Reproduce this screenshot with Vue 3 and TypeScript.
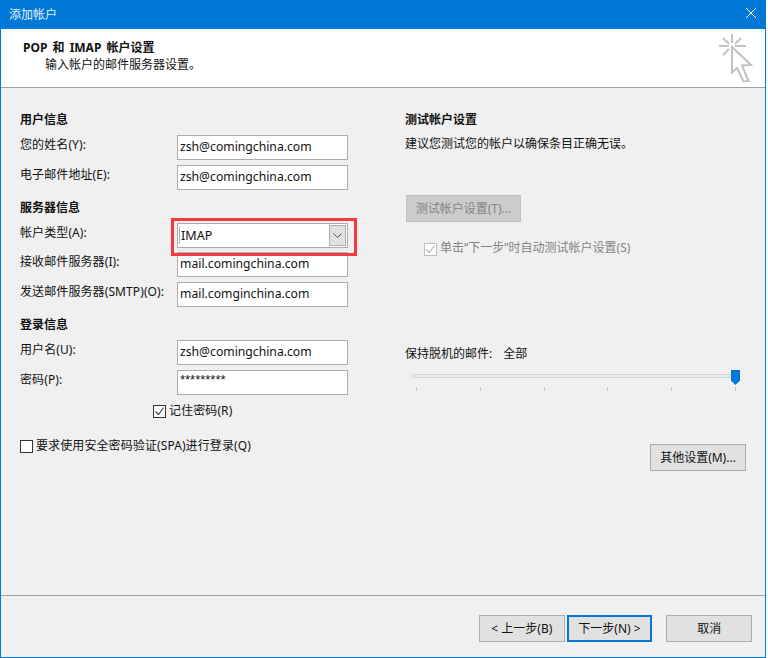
<script setup lang="ts">
const ticks: number[] = [0, 1, 2, 3, 4, 5]
</script>

<template>
  <div class="window">
    <div class="titlebar">
      <span class="title">添加帐户</span>
      <svg class="close" width="10" height="10" viewBox="0 0 10 10">
        <path d="M0 0 L10 10 M10 0 L0 10" stroke="#fff" stroke-width="1" fill="none" />
      </svg>
    </div>
    <div class="header">
      <div class="header-text">
        <div class="h-title">POP 和 IMAP 帐户设置</div>
        <div class="h-sub">输入帐户的邮件服务器设置。</div>
      </div>
      <svg class="wizard" width="36" height="52" viewBox="0 0 36 52">
        <g stroke="#c2c2c2" stroke-width="2" fill="none">
          <path d="M14 1 V10 M1 13 H11 M17 13 H28 M5 5 L11 11 M23 5 L17 11 M5 22 L11 16" />
          <path d="M14 14 L33 32 L24 32.5 L30.5 48 L25.5 48.5 L19 35 L14 39.5 Z" fill="#fff" />
        </g>
      </svg>
    </div>
    <div class="content">
      <div class="columns">
        <div class="left">
          <div class="section first">用户信息</div>
          <div class="row"><label>您的姓名(Y):</label><div class="input">zsh@comingchina.com</div></div>
          <div class="row"><label>电子邮件地址(E):</label><div class="input">zsh@comingchina.com</div></div>
          <div class="section">服务器信息</div>
          <div class="row">
            <label>帐户类型(A):</label>
            <div class="select">
              <span class="select-value">IMAP</span>
              <span class="select-btn">
                <svg width="9" height="5" viewBox="0 0 9 5"><path d="M0.5 0.5 L4.5 4.5 L8.5 0.5" stroke="#555" fill="none" /></svg>
              </span>
              <span class="highlight"></span>
            </div>
          </div>
          <div class="row tight"><label>接收邮件服务器(I):</label><div class="input">mail.comingchina.com</div></div>
          <div class="row"><label>发送邮件服务器(SMTP)(O):</label><div class="input">mail.comginchina.com</div></div>
          <div class="section">登录信息</div>
          <div class="row"><label>用户名(U):</label><div class="input">zsh@comingchina.com</div></div>
          <div class="row"><label>密码(P):</label><div class="input pwd">*********</div></div>
          <div class="check remember">
            <span class="box">
              <svg width="11" height="11" viewBox="0 0 11 11"><path d="M1.5 5.5 L4.5 8.5 L9.5 1.5" stroke="#444" stroke-width="1.2" fill="none" /></svg>
            </span>
            <span>记住密码(R)</span>
          </div>
          <div class="check spa">
            <span class="box"></span>
            <span>要求使用安全密码验证(SPA)进行登录(Q)</span>
          </div>
        </div>
        <div class="right">
          <div class="section first">测试帐户设置</div>
          <div class="advice">建议您测试您的帐户以确保条目正确无误。</div>
          <div class="btn disabled test">测试帐户设置(T)...</div>
          <div class="check auto">
            <span class="box">
              <svg width="11" height="11" viewBox="0 0 11 11"><path d="M1.5 5.5 L4.5 8.5 L9.5 1.5" stroke="#b5b5b5" stroke-width="1.2" fill="none" /></svg>
            </span>
            <span>单击“下一步”时自动测试帐户设置(S)</span>
          </div>
          <div class="offline"><span>保持脱机的邮件:</span><span>全部</span></div>
          <div class="slider">
            <div class="track"></div>
            <svg class="thumb" width="9" height="15" viewBox="0 0 9 15"><path d="M0 0 H9 V10.5 L4.5 15 L0 10.5 Z" fill="#0078d7" /></svg>
            <div class="ticks"><i v-for="t in ticks" :key="t"></i></div>
          </div>
          <div class="more-wrap"><div class="btn more">其他设置(M)...</div></div>
        </div>
      </div>
      <div class="footer">
        <div class="btn nav">&lt; 上一步(B)</div>
        <div class="btn nav next">下一步(N) &gt;</div>
        <div class="btn nav cancel">取消</div>
      </div>
    </div>
  </div>
</template>

<style scoped>
.window {
  box-sizing: border-box;
  width: 766px;
  height: 658px;
  border: 1px solid #0078d7;
  border-top: 0;
  display: flex;
  flex-direction: column;
  background: #f0f0f0;
  color: #111;
  font-family: "Noto Sans", "Noto Sans CJK SC", sans-serif;
  font-size: 12px;
  line-height: 18px;
}
.titlebar {
  height: 29px;
  margin: 0 -1px;
  padding: 0 10px 0 9px;
  background: #0078d7;
  display: flex;
  align-items: center;
  justify-content: space-between;
  color: #e8f2fb;
  flex: none;
}
.title { font-size: 12px; }
.close { display: block; margin-bottom: 3px; }
.header {
  height: 59px;
  flex: none;
  box-sizing: border-box;
  background: #fff;
  border-bottom: 1px solid #a0a0a0;
  display: flex;
  justify-content: space-between;
  padding: 0 11px 0 22px;
}
.h-title { font-weight: 700; line-height: 17px; margin-top: 10px; word-spacing: 2px; }
.h-sub { padding-left: 22px; line-height: 18px; }
.wizard { display: block; margin-top: 4px; }
.content { flex: 1; display: flex; flex-direction: column; min-height: 0; }
.columns { flex: 1; display: flex; padding: 0 19px; }
.left { width: 385px; flex: none; letter-spacing: 0.1px; }
.right { flex: 1; min-width: 0; }
.section { font-weight: 700; line-height: 18px; height: 18px; margin-top: 9px; letter-spacing: 0; }
.section.first { margin-top: 23px; }
.row {
  display: grid;
  grid-template-columns: 157px 171px;
  margin-top: 5px;
}
.section + .row { margin-top: 6px; }
.row.tight { margin-top: 4px; }
.row label { line-height: 18px; margin-top: 1px; }
.input {
  box-sizing: border-box;
  height: 25px;
  border: 1px solid #adadad;
  background: #fff;
  padding: 0 2px;
  font-size: 12.2px;
  letter-spacing: 0;
  line-height: 22px;
}
.pwd { font-family: "Liberation Sans", sans-serif; font-size: 13px; line-height: 17px; }
.select {
  position: relative;
  box-sizing: border-box;
  height: 25px;
  border: 1px solid #adadad;
  background: #fff;
  display: flex;
  align-items: center;
  justify-content: space-between;
  padding: 0 1px 0 1px;
  font-size: 12.6px;
  letter-spacing: 0;
}
.select-value { border-left: 1px solid #99b4d1; padding-left: 1px; line-height: 17px; margin-bottom: 1px; }
.select-btn {
  box-sizing: border-box;
  width: 17px;
  height: 21px;
  border: 1px solid #adadad;
  background: #e1e1e1;
  display: flex;
  align-items: center;
  justify-content: center;
}
.highlight {
  position: absolute;
  left: -7px;
  right: -10px;
  top: -6px;
  bottom: -9px;
  border: 3px solid #f23a3f;
  pointer-events: none;
  z-index: 1;
}
.check { display: flex; align-items: center; gap: 3px; line-height: 18px; }
.box {
  box-sizing: border-box;
  width: 13px;
  height: 13px;
  border: 1px solid #333;
  background: #fff;
  display: flex;
  align-items: center;
  justify-content: center;
  flex: none;
}
.remember { margin: 7px 0 0 133px; }
.spa { margin-top: 17px; }
.advice { margin-top: 6px; }
.btn {
  box-sizing: border-box;
  height: 27px;
  border: 1px solid #adadad;
  background: #e1e1e1;
  display: flex;
  align-items: center;
  justify-content: center;
}
.btn.disabled { background: #cccccc; border-color: #bfbfbf; color: #838383; }
.test { width: 115px; margin: 42px 0 0 1px; }
.auto { margin: 17px 0 0 19px; color: #838383; }
.auto .box { border-color: #bfbfbf; margin-top: 3px; }
.offline { margin-top: 88px; display: flex; gap: 11px; }
.slider {
  position: relative;
  box-sizing: border-box;
  margin: 7px 0 0 7px;
  padding-top: 4px;
  width: 330px;
  height: 24px;
}
.track {
  box-sizing: border-box;
  height: 4px;
  width: 324px;
  background: #e7eae7;
  border: 1px solid #d6d6d6;
}
.thumb { position: absolute; left: 319px; top: 0; display: block; }
.ticks {
  display: flex;
  justify-content: space-between;
  width: 320px;
  margin: 9px 0 0 4px;
}
.ticks i { display: block; width: 1px; height: 4px; background: #c4c4c4; }
.more-wrap { margin-top: 50px; display: flex; justify-content: flex-end; }
.more { width: 96px; }
.footer {
  flex: none;
  height: 62px;
  box-sizing: border-box;
  border-top: 1px solid #a0a0a0;
  display: flex;
  padding: 19px 13px 0 478px;
}
.nav { width: 86px; }
.next { margin-left: 2px; border: 2px solid #0078d7; }
.cancel { margin-left: 14px; }
</style>

<style>
html, body { background: #fff; margin: 0; }
</style>
